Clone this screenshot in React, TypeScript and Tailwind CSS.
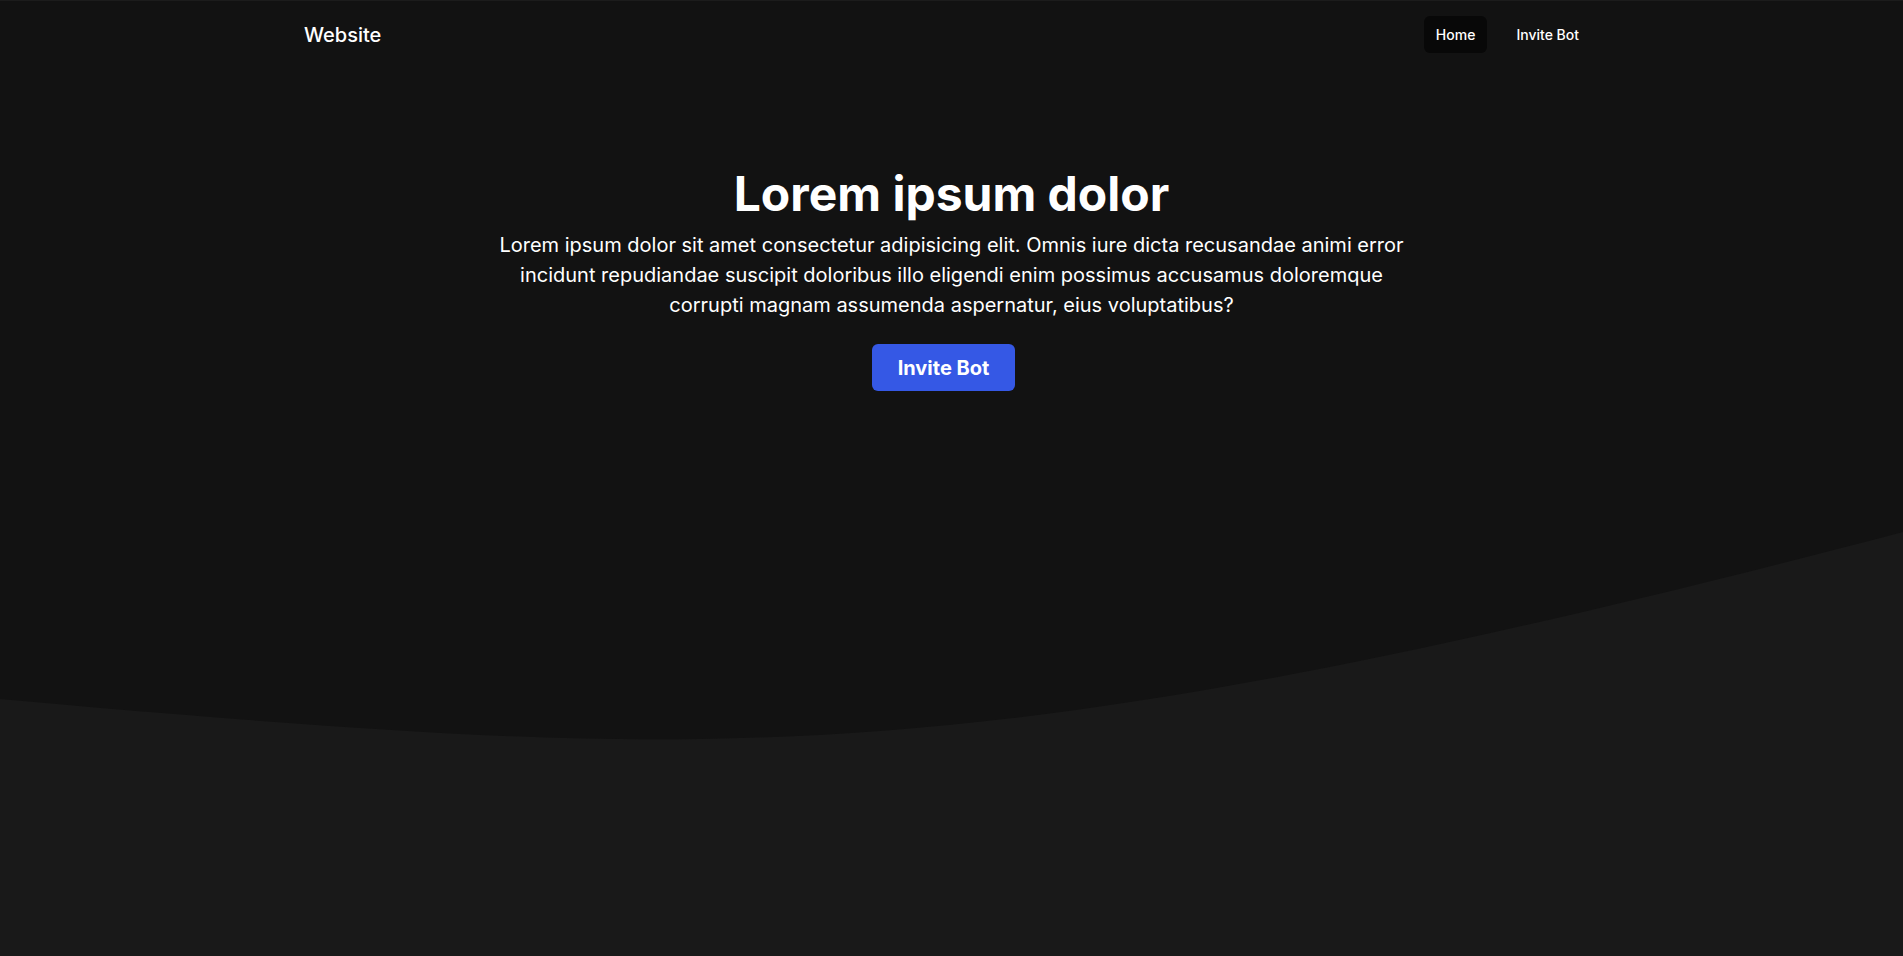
export default function App() {
    return (
        <div className="flex flex-col h-screen bg-[#121212] text-white overflow-hidden border-t border-[#1c1c1c] font-['Inter',sans-serif]">
            <header className="flex items-center justify-between h-[67px] pl-[304px] pr-[312px] shrink-0">
                <span className="text-[20px] font-medium">Website</span>
                <nav className="flex items-center gap-[17px] text-[14px] font-medium">
                    <a className="h-[37px] px-3 flex items-center rounded-md bg-[#080808]">Home</a>
                    <a className="h-[37px] px-3 flex items-center rounded-md">Invite Bot</a>
                </nav>
            </header>

            <main className="flex flex-col items-center pt-[102px] text-center shrink-0">
                <h1 className="text-5xl leading-none font-bold mb-3">Lorem ipsum dolor</h1>
                <p className="max-w-[920px] text-[20px] leading-[30px]">
                    Lorem ipsum dolor sit amet consectetur adipisicing elit. Omnis iure dicta recusandae animi error
                    incidunt repudiandae suscipit doloribus illo eligendi enim possimus accusamus doloremque
                    corrupti magnam assumenda aspernatur, eius voluptatibus?
                </p>
                <button className="mt-6 mr-4 w-[143px] h-[47px] flex items-center justify-center rounded-md bg-[#3558e5] text-[20px] font-bold">
                    Invite Bot
                </button>
            </main>

            <svg className="mt-auto w-full h-[426px] shrink-0 block" viewBox="0 0 1903 426" preserveAspectRatio="none">
                <path d="M0,169 C300,196 520,212 700,209 C1000,204 1300,160 1903,2 V426 H0 Z" fill="#191919" />
            </svg>
        </div>
    );
}
